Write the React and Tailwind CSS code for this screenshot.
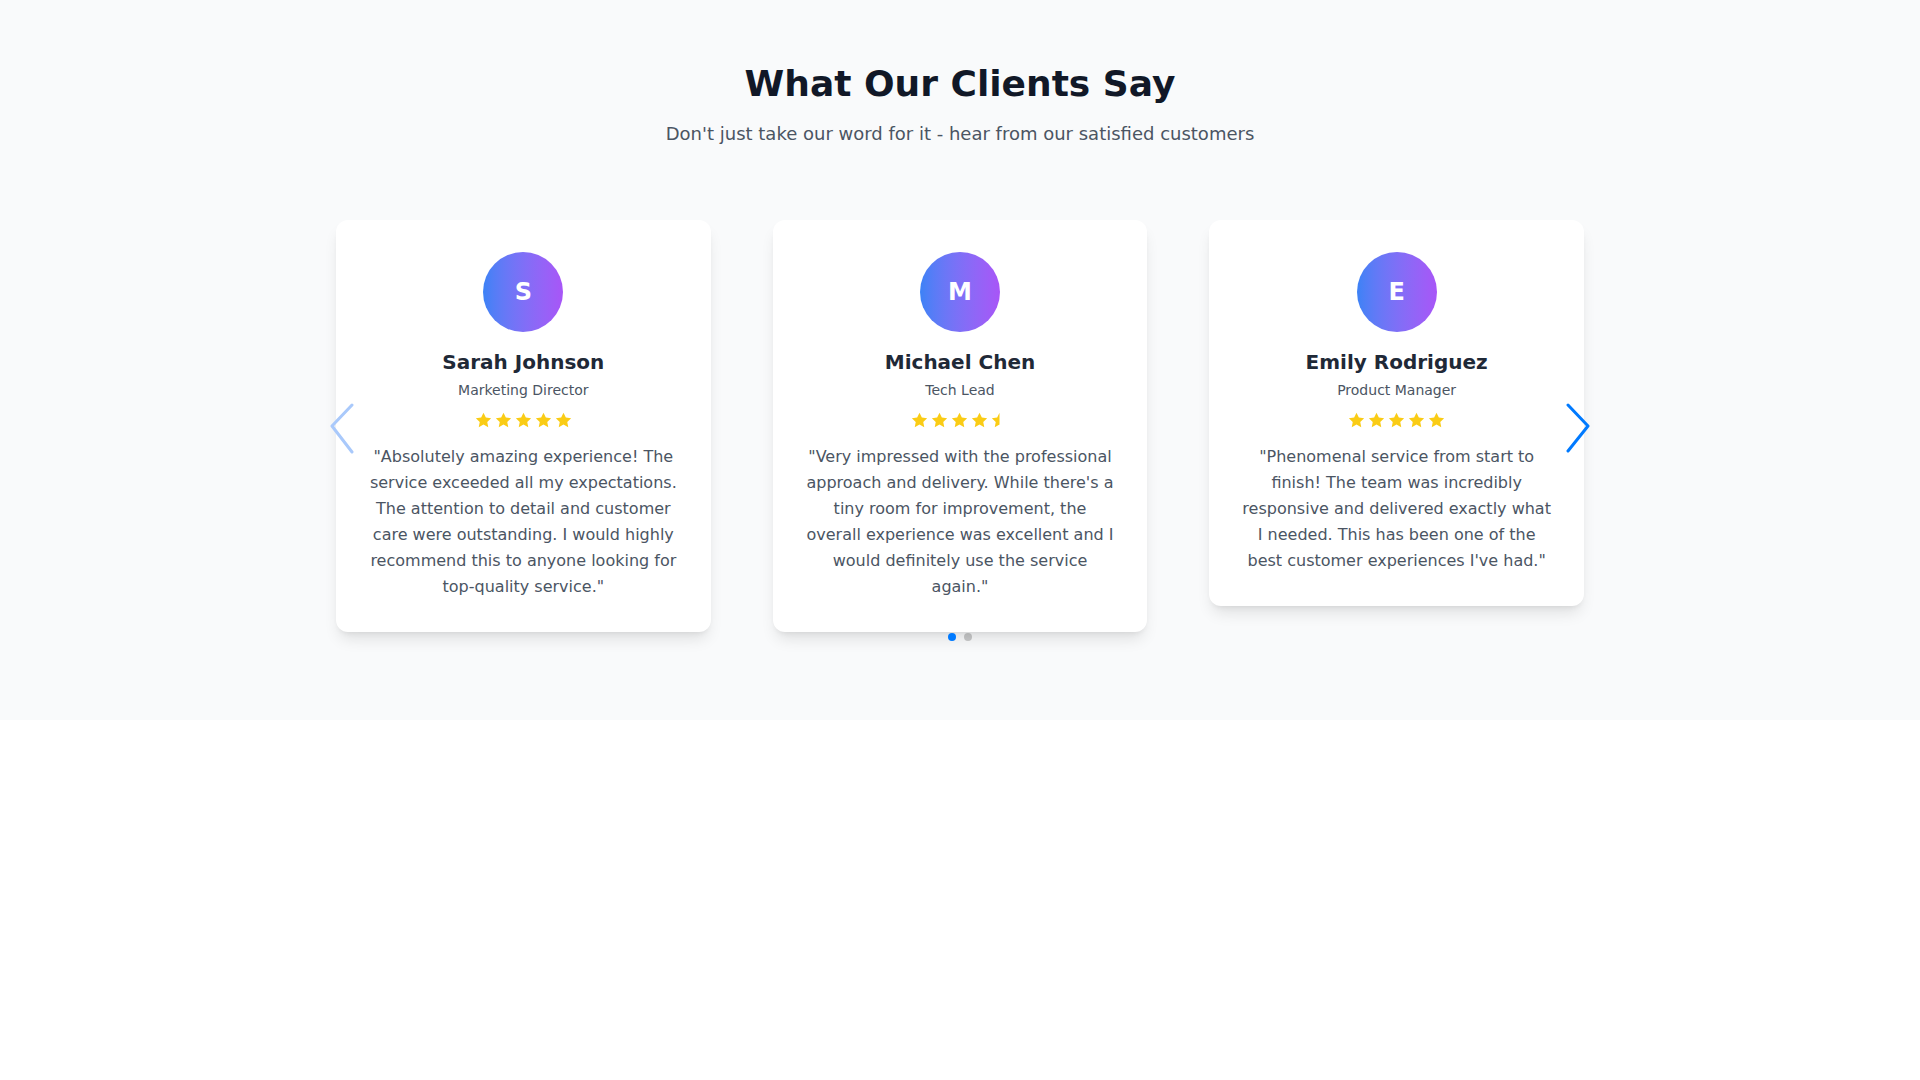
const testimonials = [
  {
    initial: 'S',
    name: 'Sarah Johnson',
    role: 'Marketing Director',
    rating: 5,
    text: '"Absolutely amazing experience! The service exceeded all my expectations. The attention to detail and customer care were outstanding. I would highly recommend this to anyone looking for top-quality service."',
  },
  {
    initial: 'M',
    name: 'Michael Chen',
    role: 'Tech Lead',
    rating: 4.5,
    text: '"Very impressed with the professional approach and delivery. While there\'s a tiny room for improvement, the overall experience was excellent and I would definitely use the service again."',
  },
  {
    initial: 'E',
    name: 'Emily Rodriguez',
    role: 'Product Manager',
    rating: 5,
    text: '"Phenomenal service from start to finish! The team was incredibly responsive and delivered exactly what I needed. This has been one of the best customer experiences I\'ve had."',
  },
]

const starPath = 'M12 1l3.3 6.9 7.5.9-5.5 5.2 1.4 7.5L12 17.8 5.3 21.5l1.4-7.5L1.2 8.8l7.5-.9L12 1z'

function Star({ half }) {
  return (
    <svg viewBox="0 0 24 24" className="w-[17px] h-[17px]">
      {half ? (
        <>
          <defs>
            <clipPath id="half">
              <rect x="0" y="0" width="12" height="24" />
            </clipPath>
          </defs>
          <path d={starPath} fill="#facc15" clipPath="url(#half)" />
        </>
      ) : (
        <path d={starPath} fill="#facc15" />
      )}
    </svg>
  )
}

function Stars({ rating }) {
  const full = Math.floor(rating)
  const half = rating % 1 !== 0
  return (
    <div className="flex items-center justify-center gap-[3px] mb-[15px]">
      {Array.from({ length: full }).map((_, i) => <Star key={i} />)}
      {half && <Star half />}
    </div>
  )
}

function Card({ t }) {
  return (
    <div className="bg-white rounded-xl shadow-lg p-8 flex flex-col items-center text-center">
      <div className="w-20 h-20 rounded-full bg-gradient-to-r from-[#3b82f6] to-[#a855f7] flex items-center justify-center text-white text-2xl font-bold mb-4">
        {t.initial}
      </div>
      <h3 className="text-xl font-bold text-[#1f2937] mb-1">{t.name}</h3>
      <p className="text-sm text-[#4b5563] mb-3">{t.role}</p>
      <Stars rating={t.rating} />
      <p className="text-base leading-[26px] text-[#4b5563]">{t.text}</p>
    </div>
  )
}

export default function App() {
  return (
    <div className="min-h-screen bg-white font-['DejaVu_Sans',sans-serif]">
      <section className="bg-[#f9fafb] pt-16 pb-[71px]">
        <div className="max-w-7xl mx-auto px-4">
          {/* Header */}
          <div className="text-center mb-12">
            <h2 className="text-4xl font-bold text-[#111827] mb-4">What Our Clients Say</h2>
            <p className="text-lg text-[#4b5563]">Don't just take our word for it - hear from our satisfied customers</p>
          </div>

          {/* Slider */}
          <div className="relative pt-6 pb-[17px]">
            <div className="grid grid-cols-3 gap-[62px] items-start">
              {testimonials.map(t => <Card key={t.name} t={t} />)}
            </div>

            <svg className="absolute left-[-6px] top-[206px] w-[24px] h-[54px]" viewBox="0 0 24 54" fill="none">
              <polyline points="22,3 2,24 22,50" stroke="#a9c9fb" strokeWidth="3" strokeLinecap="round" strokeLinejoin="round" />
            </svg>
            <svg className="absolute right-[-6px] top-[206px] w-[24px] h-[54px]" viewBox="0 0 24 54" fill="none">
              <polyline points="2,3 22,24 2,49" stroke="#007aff" strokeWidth="3" strokeLinecap="round" strokeLinejoin="round" />
            </svg>

            {/* Pagination */}
            <div className="absolute bottom-2 left-0 right-0 flex justify-center gap-2">
              <span className="w-2 h-2 rounded-full bg-[#007aff]" />
              <span className="w-2 h-2 rounded-full bg-black/20" />
            </div>
          </div>
        </div>
      </section>
    </div>
  )
}
